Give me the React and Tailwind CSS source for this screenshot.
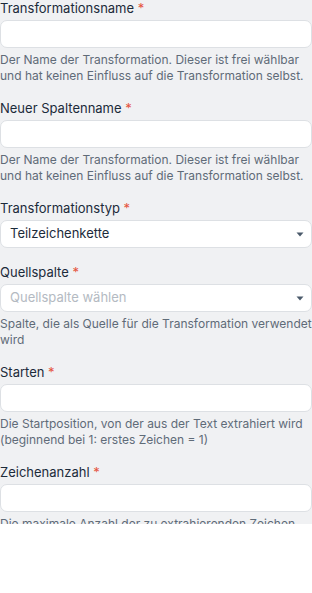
import React from 'react';

const fields = [
  {
    label: 'Transformationsname',
    type: 'input',
    help: 'Der Name der Transformation. Dieser ist frei wählbar und hat keinen Einfluss auf die Transformation selbst.',
  },
  {
    label: 'Neuer Spaltenname',
    type: 'input',
    help: 'Der Name der Transformation. Dieser ist frei wählbar und hat keinen Einfluss auf die Transformation selbst.',
  },
  { label: 'Transformationstyp', type: 'select', value: 'Teilzeichenkette' },
  {
    label: 'Quellspalte',
    type: 'select',
    placeholder: 'Quellspalte wählen',
    help: 'Spalte, die als Quelle für die Transformation verwendet wird',
  },
  {
    label: 'Starten',
    type: 'input',
    help: 'Die Startposition, von der aus der Text extrahiert wird (beginnend bei 1: erstes Zeichen = 1)',
  },
  {
    label: 'Zeichenanzahl',
    type: 'input',
    help: 'Die maximale Anzahl der zu extrahierenden Zeichen',
  },
];

const Caret = () => (
  <svg width="8" height="5" viewBox="0 0 8 5" className="shrink-0">
    <path d="M0.5 0.5h7L4 4.5z" fill="#4b5a6b" />
  </svg>
);

const Field = ({ field }) => (
  <div className="mb-[16px]">
    <div className="text-[13px] leading-[16px] text-[#1c2b3a]">
      {field.label} <span className="text-[#e5533d]">*</span>
    </div>
    {field.type === 'input' ? (
      <div className="mt-[4px] h-[28px] rounded-[7px] border border-[#dde0e4] bg-white" />
    ) : (
      <div className="mt-[4px] flex h-[28px] items-center justify-between rounded-[7px] border border-[#dde0e4] bg-white pl-[9px] pr-[7px]">
        {field.value ? (
          <span className="text-[13px] text-[#1c2b3a]">{field.value}</span>
        ) : (
          <span className="text-[13px] text-[#b4bac2]">{field.placeholder}</span>
        )}
        <Caret />
      </div>
    )}
    {field.help && (
      <p className="mt-[4px] text-[12px] leading-[16px] text-[#5f6b78]">{field.help}</p>
    )}
  </div>
);

export default function App() {
  return (
    <div className="w-[312px] bg-white font-['Inter',sans-serif]">
      <div className="h-[524px] overflow-hidden bg-[#f0f1f3]">
        {fields.map((f) => (
          <Field key={f.label} field={f} />
        ))}
      </div>
    </div>
  );
}
